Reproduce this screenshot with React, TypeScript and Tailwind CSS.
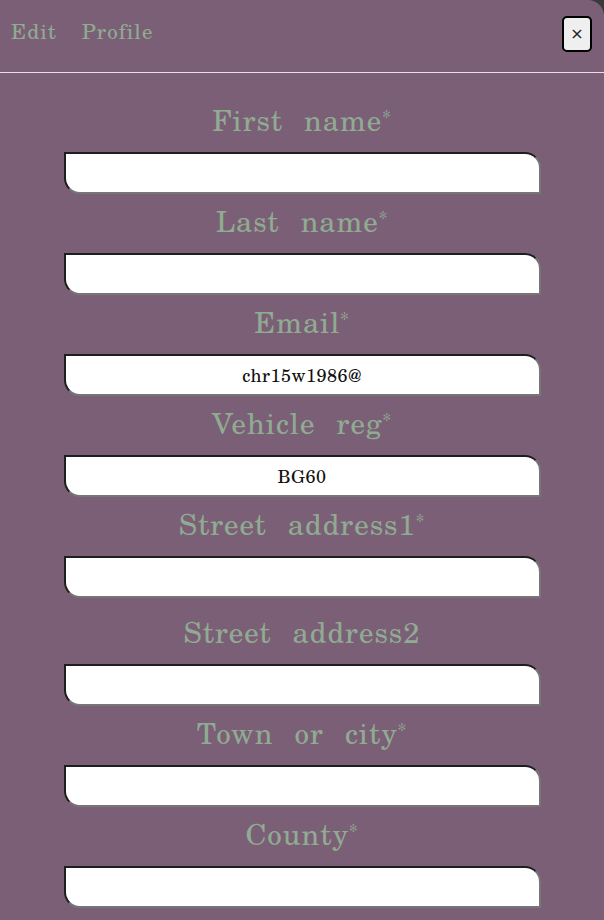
import React from "react";

const fields: { label: string; req: boolean; value: string; extra?: boolean }[] = [
  { label: "First name", req: true, value: "" },
  { label: "Last name", req: true, value: "" },
  { label: "Email", req: true, value: "chr15w1986@" },
  { label: "Vehicle reg", req: true, value: "BG60" },
  { label: "Street address1", req: true, value: "" },
  { label: "Street address2", req: false, value: "", extra: true },
  { label: "Town or city", req: true, value: "" },
  { label: "County", req: true, value: "" },
];

const serif = { fontFamily: '"TeX Gyre Schola", "Liberation Serif", serif' };

export default function App() {
  return (
    <div className="w-[604px] h-[920px] bg-[#3a3a3a] overflow-hidden">
      <div className="w-full h-full bg-[#7b5f76] rounded-tr-[16px]" style={serif}>
        <div className="flex items-start justify-between h-[73px] border-b border-[#e8e0e6] pl-[11px] pr-[12px]">
          <div className="mt-[17px] text-[21px] leading-[28px] text-[#8fab91] tracking-[1px] [word-spacing:18px]">Edit Profile</div>
          <button className="mt-[16px] w-[30px] h-[36px] bg-[#efefef] border-2 border-black rounded-[5px] flex items-center justify-center text-[16px] text-[#222]" style={{ fontFamily: '"DejaVu Sans", sans-serif' }}>
            ×
          </button>
        </div>
        <div className="flex flex-col items-center">
          {fields.map((f, i) => (
            <div key={i} className={`flex flex-col items-center w-full ${f.extra ? "mt-[7px]" : ""}`}>
              <label className={`${i === 0 ? "mt-[27px]" : "mt-[7px]"} text-[29px] leading-[40px] text-[#8fab91] tracking-[1px] [word-spacing:12px]`}>
                {f.label}
                {f.req && <sup className="text-[17px]">*</sup>}
              </label>
              <div className="mt-[12px] w-[477px] h-[42px] bg-white border-2 border-t-[#1e1e1e] border-l-[#1e1e1e] border-b-[#767676] border-r-[#767676] rounded-tr-[16px] rounded-bl-[16px] flex items-center justify-center text-[18px] tracking-[0.5px] text-[#111]">
                {f.value}
              </div>
            </div>
          ))}
        </div>
      </div>
    </div>
  );
}
